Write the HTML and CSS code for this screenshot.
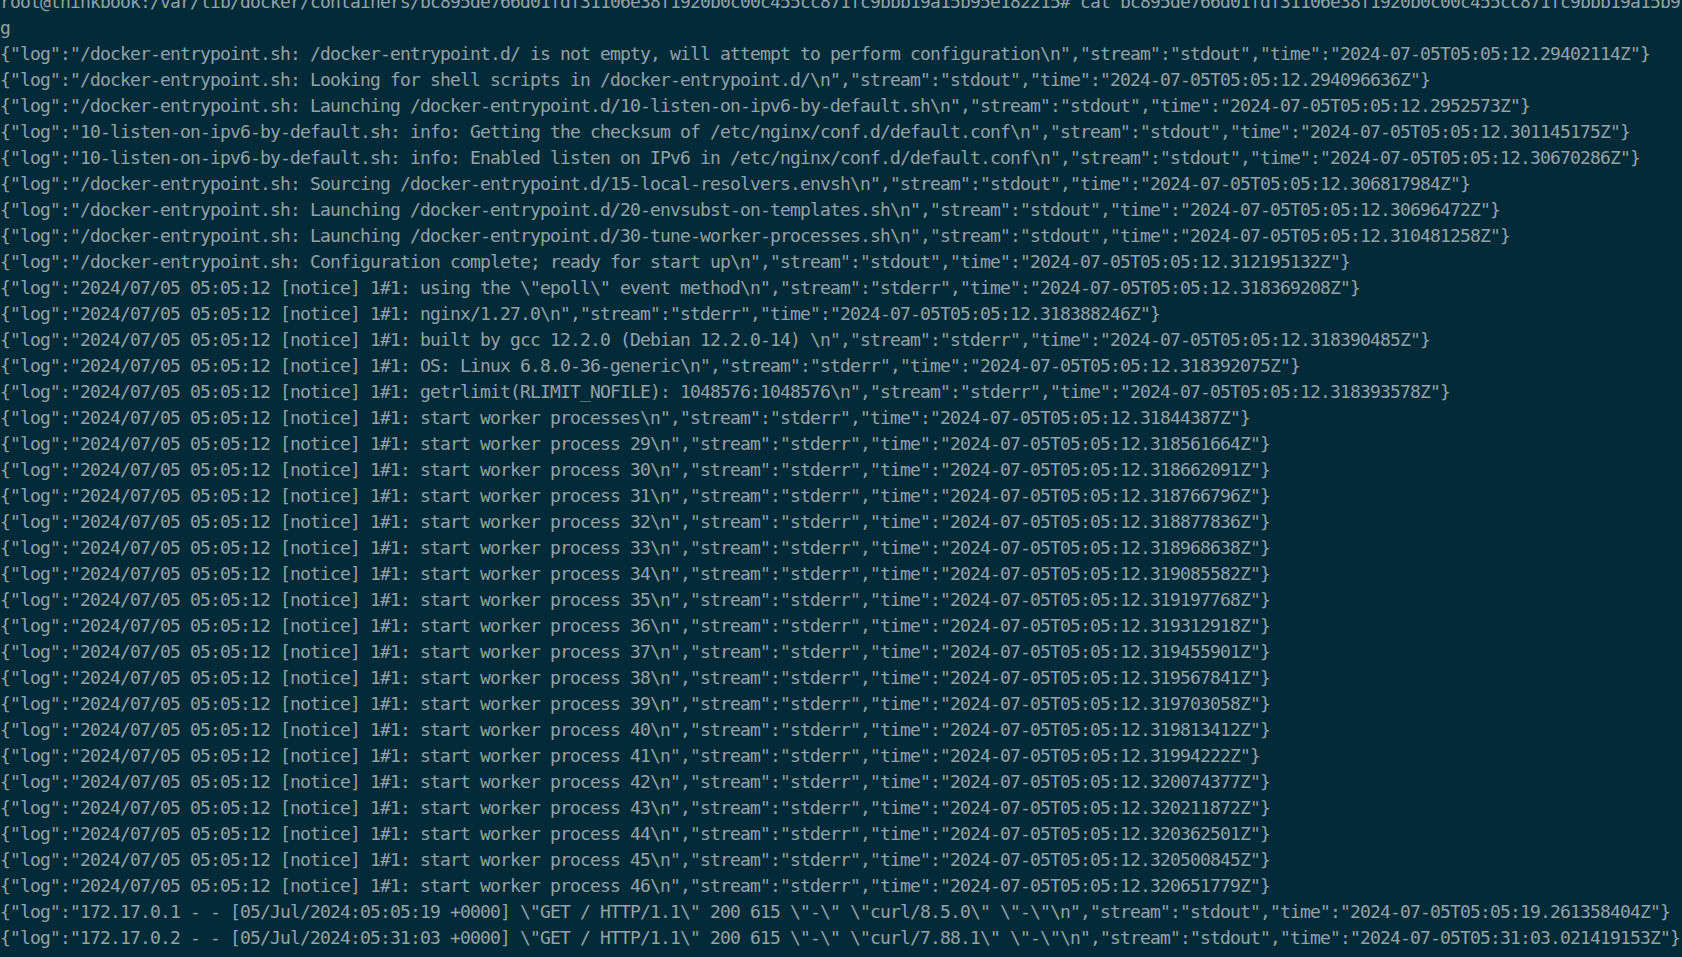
FILE: index.html
```html
<!DOCTYPE html>
<html lang="en">
<head>
  <meta charset="UTF-8">
  <meta name="viewport" content="width=device-width, initial-scale=1.0">
  <title>Terminal</title>
  <link rel="stylesheet" href="styles.css">
</head>
<body>
  <div class="terminal">
<pre class="salida">root@thinkbook:/var/lib/docker/containers/bc895de766d01fdf31106e38f1920b0c00c455cc871fc9bbb19a15b95e182215# cat bc895de766d01fdf31106e38f1920b0c00c455cc871fc9bbb19a15b9
g
{"log":"/docker-entrypoint.sh: /docker-entrypoint.d/ is not empty, will attempt to perform configuration\n","stream":"stdout","time":"2024-07-05T05:05:12.29402114Z"}
{"log":"/docker-entrypoint.sh: Looking for shell scripts in /docker-entrypoint.d/\n","stream":"stdout","time":"2024-07-05T05:05:12.294096636Z"}
{"log":"/docker-entrypoint.sh: Launching /docker-entrypoint.d/10-listen-on-ipv6-by-default.sh\n","stream":"stdout","time":"2024-07-05T05:05:12.2952573Z"}
{"log":"10-listen-on-ipv6-by-default.sh: info: Getting the checksum of /etc/nginx/conf.d/default.conf\n","stream":"stdout","time":"2024-07-05T05:05:12.301145175Z"}
{"log":"10-listen-on-ipv6-by-default.sh: info: Enabled listen on IPv6 in /etc/nginx/conf.d/default.conf\n","stream":"stdout","time":"2024-07-05T05:05:12.30670286Z"}
{"log":"/docker-entrypoint.sh: Sourcing /docker-entrypoint.d/15-local-resolvers.envsh\n","stream":"stdout","time":"2024-07-05T05:05:12.306817984Z"}
{"log":"/docker-entrypoint.sh: Launching /docker-entrypoint.d/20-envsubst-on-templates.sh\n","stream":"stdout","time":"2024-07-05T05:05:12.30696472Z"}
{"log":"/docker-entrypoint.sh: Launching /docker-entrypoint.d/30-tune-worker-processes.sh\n","stream":"stdout","time":"2024-07-05T05:05:12.310481258Z"}
{"log":"/docker-entrypoint.sh: Configuration complete; ready for start up\n","stream":"stdout","time":"2024-07-05T05:05:12.312195132Z"}
{"log":"2024/07/05 05:05:12 [notice] 1#1: using the \"epoll\" event method\n","stream":"stderr","time":"2024-07-05T05:05:12.318369208Z"}
{"log":"2024/07/05 05:05:12 [notice] 1#1: nginx/1.27.0\n","stream":"stderr","time":"2024-07-05T05:05:12.318388246Z"}
{"log":"2024/07/05 05:05:12 [notice] 1#1: built by gcc 12.2.0 (Debian 12.2.0-14) \n","stream":"stderr","time":"2024-07-05T05:05:12.318390485Z"}
{"log":"2024/07/05 05:05:12 [notice] 1#1: OS: Linux 6.8.0-36-generic\n","stream":"stderr","time":"2024-07-05T05:05:12.318392075Z"}
{"log":"2024/07/05 05:05:12 [notice] 1#1: getrlimit(RLIMIT_NOFILE): 1048576:1048576\n","stream":"stderr","time":"2024-07-05T05:05:12.318393578Z"}
{"log":"2024/07/05 05:05:12 [notice] 1#1: start worker processes\n","stream":"stderr","time":"2024-07-05T05:05:12.31844387Z"}
{"log":"2024/07/05 05:05:12 [notice] 1#1: start worker process 29\n","stream":"stderr","time":"2024-07-05T05:05:12.318561664Z"}
{"log":"2024/07/05 05:05:12 [notice] 1#1: start worker process 30\n","stream":"stderr","time":"2024-07-05T05:05:12.318662091Z"}
{"log":"2024/07/05 05:05:12 [notice] 1#1: start worker process 31\n","stream":"stderr","time":"2024-07-05T05:05:12.318766796Z"}
{"log":"2024/07/05 05:05:12 [notice] 1#1: start worker process 32\n","stream":"stderr","time":"2024-07-05T05:05:12.318877836Z"}
{"log":"2024/07/05 05:05:12 [notice] 1#1: start worker process 33\n","stream":"stderr","time":"2024-07-05T05:05:12.318968638Z"}
{"log":"2024/07/05 05:05:12 [notice] 1#1: start worker process 34\n","stream":"stderr","time":"2024-07-05T05:05:12.319085582Z"}
{"log":"2024/07/05 05:05:12 [notice] 1#1: start worker process 35\n","stream":"stderr","time":"2024-07-05T05:05:12.319197768Z"}
{"log":"2024/07/05 05:05:12 [notice] 1#1: start worker process 36\n","stream":"stderr","time":"2024-07-05T05:05:12.319312918Z"}
{"log":"2024/07/05 05:05:12 [notice] 1#1: start worker process 37\n","stream":"stderr","time":"2024-07-05T05:05:12.319455901Z"}
{"log":"2024/07/05 05:05:12 [notice] 1#1: start worker process 38\n","stream":"stderr","time":"2024-07-05T05:05:12.319567841Z"}
{"log":"2024/07/05 05:05:12 [notice] 1#1: start worker process 39\n","stream":"stderr","time":"2024-07-05T05:05:12.319703058Z"}
{"log":"2024/07/05 05:05:12 [notice] 1#1: start worker process 40\n","stream":"stderr","time":"2024-07-05T05:05:12.319813412Z"}
{"log":"2024/07/05 05:05:12 [notice] 1#1: start worker process 41\n","stream":"stderr","time":"2024-07-05T05:05:12.31994222Z"}
{"log":"2024/07/05 05:05:12 [notice] 1#1: start worker process 42\n","stream":"stderr","time":"2024-07-05T05:05:12.320074377Z"}
{"log":"2024/07/05 05:05:12 [notice] 1#1: start worker process 43\n","stream":"stderr","time":"2024-07-05T05:05:12.320211872Z"}
{"log":"2024/07/05 05:05:12 [notice] 1#1: start worker process 44\n","stream":"stderr","time":"2024-07-05T05:05:12.320362501Z"}
{"log":"2024/07/05 05:05:12 [notice] 1#1: start worker process 45\n","stream":"stderr","time":"2024-07-05T05:05:12.320500845Z"}
{"log":"2024/07/05 05:05:12 [notice] 1#1: start worker process 46\n","stream":"stderr","time":"2024-07-05T05:05:12.320651779Z"}
{"log":"172.17.0.1 - - [05/Jul/2024:05:05:19 +0000] \"GET / HTTP/1.1\" 200 615 \"-\" \"curl/8.5.0\" \"-\"\n","stream":"stdout","time":"2024-07-05T05:05:19.261358404Z"}
{"log":"172.17.0.2 - - [05/Jul/2024:05:31:03 +0000] \"GET / HTTP/1.1\" 200 615 \"-\" \"curl/7.88.1\" \"-\"\n","stream":"stdout","time":"2024-07-05T05:31:03.021419153Z"}</pre>
  </div>
</body>
</html>
```

FILE: styles.css
```css
* { box-sizing: border-box; margin: 0; padding: 0; }
html, body { height: 100%; }
body {
  background: #032a39;
  color: #93a3a8;
  overflow: hidden;
}
.terminal {
  height: 100vh;
  overflow: hidden;
}
.salida {
  margin-top: -11px;
  font-family: 'DejaVu Sans Mono', 'Liberation Mono', monospace;
  font-size: 18px;
  letter-spacing: -0.837px;
  line-height: 26px;
  white-space: pre;
}
```
